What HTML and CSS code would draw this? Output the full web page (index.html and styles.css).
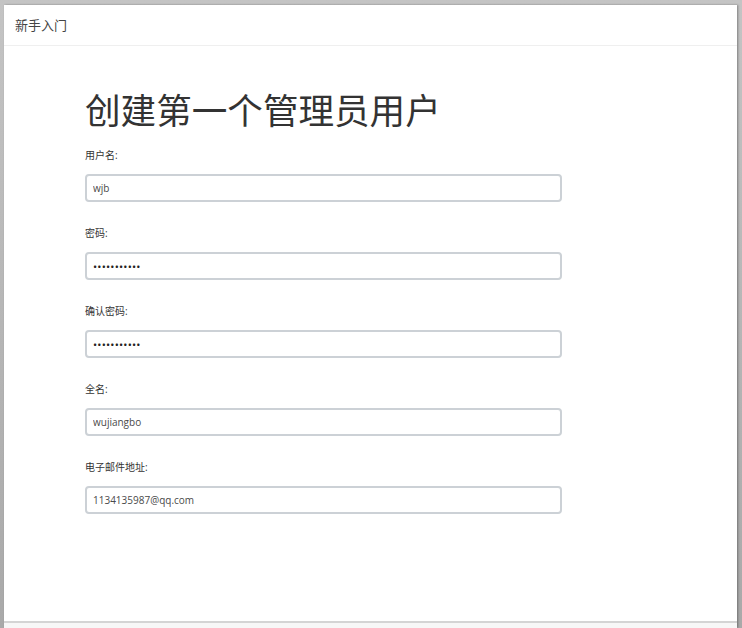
FILE: index.html
```html
<!DOCTYPE html>
<html lang="zh-CN">
<head>
    <meta charset="UTF-8">
    <title>新手入门</title>
    <link rel="stylesheet" href="styles.css">
</head>
<body>
    <div class="dialog">
        <div class="dialog_head">新手入门</div>
        <div class="dialog_body">
            <h1 class="title">创建第一个管理员用户</h1>
            <div class="field">
                <label>用户名:</label>
                <input type="text" value="wjb">
            </div>
            <div class="field">
                <label>密码:</label>
                <input type="password" value="12345678901">
            </div>
            <div class="field">
                <label>确认密码:</label>
                <input type="password" value="12345678901">
            </div>
            <div class="field">
                <label>全名:</label>
                <input type="text" value="wujiangbo">
            </div>
            <div class="field">
                <label>电子邮件地址:</label>
                <input type="text" value="1134135987@qq.com">
            </div>
        </div>
        <div class="dialog_foot"></div>
    </div>
</body>
</html>
```

FILE: styles.css
```css
*{
    margin: 0;
    padding: 0;
    box-sizing: border-box;
}
html, body{
    height: 100%;
    overflow: hidden;
}
body{
    background: linear-gradient(to bottom, #c4c4c4, #a9a9a9);
    padding: 5px 5px 0 4px;
    font-family: "Open Sans", "Noto Sans CJK SC", sans-serif;
    color: #333;
}
.dialog{
    background-color: #fff;
    height: 100%;
    display: flex;
    flex-direction: column;
    box-shadow: 1px 0 2px rgba(0, 0, 0, .35);
}
.dialog_head{
    height: 41px;
    line-height: 40px;
    padding-left: 11px;
    font-size: 13px;
    color: #444;
    border-bottom: 1px solid #efefef;
}
.dialog_body{
    height: 575px;
    padding: 45px 0 0 81px;
}
.title{
    font-size: 35.6px;
    font-weight: normal;
    line-height: 38px;
    height: 38px;
    color: #333;
    margin-bottom: 19px;
}
.field{
    display: flex;
    flex-direction: column;
    width: 477px;
    margin-bottom: 24px;
}
.field>label{
    font-size: 10px;
    line-height: 14px;
    color: #333;
    margin-bottom: 12px;
}
.field>input{
    height: 28px;
    border: 2px solid #ccd1d6;
    border-radius: 4px;
    padding: 0 6px;
    font-family: "Open Sans", sans-serif;
    font-size: 10px;
    color: #4a4a4a;
    outline: none;
}
.field>input[type=password]{
    font-size: 11px;
    color: #222;
    letter-spacing: 0.2px;
}
.dialog_foot{
    flex: 1;
    border-top: 2px solid #d4d4d4;
    background-color: #f7f7f7;
}
```
